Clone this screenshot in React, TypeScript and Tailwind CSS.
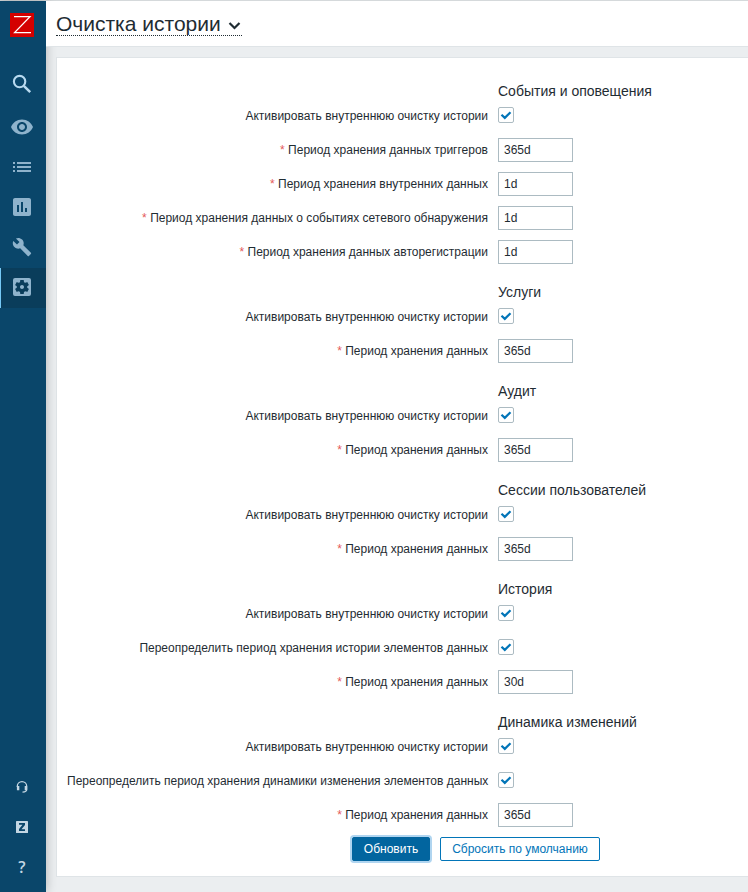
import React, { useState } from 'react';
import {
  MdVisibility,
  MdList,
  MdAssessment,
  MdBuild,
  MdSettingsApplications,
} from 'react-icons/md';

type Row =
  | { kind: 'check'; label: string }
  | { kind: 'text'; label: string; value: string };

type Section = { title: string; rows: Row[] };

const enable: Row = { kind: 'check', label: 'Активировать внутреннюю очистку истории' };
const period = (value: string): Row => ({ kind: 'text', label: 'Период хранения данных', value });

const sections: Section[] = [
  {
    title: 'События и оповещения',
    rows: [
      enable,
      { kind: 'text', label: 'Период хранения данных триггеров', value: '365d' },
      { kind: 'text', label: 'Период хранения внутренних данных', value: '1d' },
      { kind: 'text', label: 'Период хранения данных о событиях сетевого обнаружения', value: '1d' },
      { kind: 'text', label: 'Период хранения данных авторегистрации', value: '1d' },
    ],
  },
  { title: 'Услуги', rows: [enable, period('365d')] },
  { title: 'Аудит', rows: [enable, period('365d')] },
  { title: 'Сессии пользователей', rows: [enable, period('365d')] },
  {
    title: 'История',
    rows: [
      enable,
      { kind: 'check', label: 'Переопределить период хранения истории элементов данных' },
      period('30d'),
    ],
  },
  {
    title: 'Динамика изменений',
    rows: [
      enable,
      { kind: 'check', label: 'Переопределить период хранения динамики изменения элементов данных' },
      period('365d'),
    ],
  },
];

const navItems = [
  { name: 'Мониторинг', icon: <MdVisibility size={24} /> },
  { name: 'Инвентаризация', icon: <MdList size={24} /> },
  { name: 'Отчеты', icon: <MdAssessment size={24} /> },
  { name: 'Настройка', icon: <MdBuild size={20} /> },
  { name: 'Администрирование', icon: <MdSettingsApplications size={24} />, active: true },
];

function Checkbox({ id }: { id: string }) {
  const [checked, setChecked] = useState(true);
  return (
    <span className="mt-[3px] grid size-4">
      <input
        id={id}
        type="checkbox"
        checked={checked}
        onChange={(e) => setChecked(e.target.checked)}
        className="peer col-start-1 row-start-1 size-4 appearance-none rounded-xs border border-[#acbbc2] bg-white"
      />
      <svg
        viewBox="0 0 16 16"
        className="pointer-events-none invisible col-start-1 row-start-1 size-4 peer-checked:visible"
        fill="none"
        stroke="#0275b8"
        strokeWidth="2.2"
      >
        <path d="M3.5 7.7 6.8 10.9 12.5 5.2" />
      </svg>
    </span>
  );
}

function FormRow({ row, id }: { row: Row; id: string }) {
  return (
    <div className="grid h-6 grid-cols-[421px_1fr] gap-x-[10px]">
      <label htmlFor={id} className="text-right leading-6 whitespace-nowrap">
        {row.kind === 'text' && <span className="text-[#e45959]">* </span>}
        {row.label}
      </label>
      {row.kind === 'check' ? (
        <Checkbox id={id} />
      ) : (
        <input
          id={id}
          type="text"
          required
          defaultValue={row.value}
          className="h-6 w-[75px] border border-[#acbbc2] bg-white px-[5px]"
        />
      )}
    </div>
  );
}

function Sidebar() {
  return (
    <aside className="z-10 flex w-[46px] shrink-0 flex-col bg-[#0a466a] pt-3 pb-[5px] text-[#8fb3cc] shadow-[0_0_10px_rgba(0,0,0,0.25)]">
      <a href="#" aria-label="Zabbix" className="ml-[10px] block size-6">
        <svg viewBox="0 0 24 24" className="size-6">
          <rect width="24" height="24" fill="#d40000" />
          <path d="M4 3.6H20L4.6 19.6H21" fill="none" stroke="#fff" strokeWidth="1.3" />
        </svg>
      </a>
      <button type="button" aria-label="Поиск" className="mt-[27px] flex h-10 w-11 items-center justify-center text-[#b8daf0]">
        <svg viewBox="0 0 24 24" className="size-6" fill="none" stroke="currentColor">
          <circle cx="9.6" cy="9.6" r="5.7" strokeWidth="2.1" />
          <path d="M13.8 13.8 20.2 20.2" strokeWidth="2.5" />
        </svg>
      </button>
      <nav className="mt-1 flex flex-col">
        {navItems.map((item) => (
          <a
            key={item.name}
            href="#"
            aria-label={item.name}
            className={
              item.active
                ? 'flex h-10 items-center justify-center border-l border-[#75c8f5] bg-[#0a3d5b] pr-[3px] pb-[2px]'
                : 'flex h-10 items-center justify-center pr-[2px] pb-[2px]'
            }
          >
            {item.icon}
          </a>
        ))}
      </nav>
      <div className="mt-auto flex flex-col text-[#c3d6e3]">
        <a href="#" aria-label="Поддержка" className="flex h-10 items-center justify-center pr-[2px]">
          <svg viewBox="0 0 12 12" className="size-3" fill="none" stroke="currentColor">
            <path d="M1.3 6V5.2A4.7 4.5 0 0 1 10.7 5.2V8.6Q10.7 11 6.5 11.2" strokeWidth="1.3" />
            <path d="M2.1 5V9.2M9.9 5V9.2" strokeWidth="2.4" />
          </svg>
        </a>
        <a href="#" aria-label="Zabbix Share" className="flex h-10 items-center justify-center pr-[2px]">
          <svg viewBox="0 0 12 12" className="size-3">
            <rect width="12" height="12" rx="0.6" fill="currentColor" />
            <path d="M3 2H9V4L5.5 8.3H9V10H3V8L6.5 3.7H3Z" fill="#0a466a" />
          </svg>
        </a>
        <a
          href="#"
          className="flex h-10 items-center justify-center pr-[2px] font-['Open_Sans',sans-serif] text-base font-semibold"
        >
          ?
        </a>
      </div>
    </aside>
  );
}

export default function App() {
  return (
    <div className="flex min-h-screen border-t border-[#d5d9db] bg-[#ebeef0] font-['Liberation_Sans',Arial,sans-serif] text-xs text-[#1f2c33]">
      <Sidebar />
      <main className="flex min-w-0 flex-1 flex-col">
        <header className="z-20 flex h-[46px] items-start border-b border-[#dfe4e7] bg-white pl-[10px]">
          <h1 className="mt-[9px]">
            <button
              type="button"
              className="flex h-[26px] items-center gap-[7px] border-b border-dotted border-[#1f2c33] pt-[3px] text-[21px] leading-6"
            >
              Очистка истории
              <svg viewBox="0 0 14 10" className="mt-1 h-[10px] w-[14px]" fill="none" stroke="currentColor" strokeWidth="2.2">
                <path d="M1.5 2 6.5 7 11.5 2" />
              </svg>
            </button>
          </h1>
        </header>
        <form
          onSubmit={(e) => e.preventDefault()}
          className="mt-[10px] ml-[10px] border-y border-l border-[#dfe4e7] bg-white pt-[21px] pr-[10px] pb-[15px] pl-[10px]"
        >
          <div className="flex flex-col gap-4">
            {sections.map((section, s) => (
              <section key={section.title}>
                <h2 className="mb-px ml-[431px] text-sm leading-6">{section.title}</h2>
                <div className="flex flex-col gap-[10px]">
                  {section.rows.map((row, r) => (
                    <FormRow key={r} row={row} id={`field-${s}-${r}`} />
                  ))}
                </div>
              </section>
            ))}
          </div>
          <div className="mt-[10px] ml-[285px] flex gap-[10px]">
            <button
              type="submit"
              className="h-6 w-[78px] rounded-xs border border-[#02659f] bg-[#02659f] text-white shadow-[0_0_0_2px_#b0d5f0]"
            >
              Обновить
            </button>
            <button type="button" className="h-6 w-40 rounded-xs border border-[#0275b8] bg-white text-[#0275b8]">
              Сбросить по умолчанию
            </button>
          </div>
        </form>
      </main>
    </div>
  );
}
